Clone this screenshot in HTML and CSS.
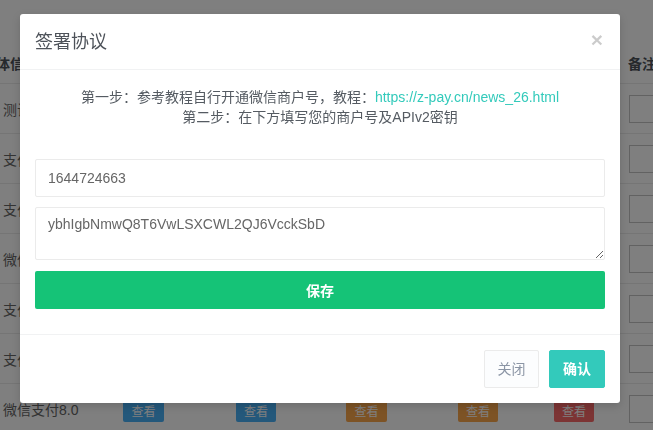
FILE: index.html
```html
<!DOCTYPE html>
<html lang="zh-CN">
<head>
<meta charset="utf-8">
<title>签署协议</title>
<link rel="stylesheet" href="styles.css">
</head>
<body>
<div class="page">
  <div class="grid">
    <div class="row head">
      <div class="c c1"><span class="clip">体信息</span></div>
      <div class="c c2"></div>
      <div class="c c3"></div>
      <div class="c c4"></div>
      <div class="c c5"></div>
      <div class="c c6"></div>
      <div class="c c7">备注</div>
    </div>
    <div class="row">
      <div class="c c1">测试通道</div>
      <div class="c c2"></div>
      <div class="c c3"></div>
      <div class="c c4"></div>
      <div class="c c5"></div>
      <div class="c c6"></div>
      <div class="c c7"><span class="box"></span></div>
    </div>
    <div class="row">
      <div class="c c1">支付宝当面付</div>
      <div class="c c2"></div>
      <div class="c c3"></div>
      <div class="c c4"></div>
      <div class="c c5"></div>
      <div class="c c6"></div>
      <div class="c c7"><span class="box"></span></div>
    </div>
    <div class="row">
      <div class="c c1">支付宝电脑网站</div>
      <div class="c c2"></div>
      <div class="c c3"></div>
      <div class="c c4"></div>
      <div class="c c5"></div>
      <div class="c c6"></div>
      <div class="c c7"><span class="box"></span></div>
    </div>
    <div class="row">
      <div class="c c1">微信支付</div>
      <div class="c c2"></div>
      <div class="c c3"></div>
      <div class="c c4"></div>
      <div class="c c5"></div>
      <div class="c c6"></div>
      <div class="c c7"><span class="box"></span></div>
    </div>
    <div class="row">
      <div class="c c1">支付宝H5</div>
      <div class="c c2"></div>
      <div class="c c3"></div>
      <div class="c c4"></div>
      <div class="c c5"></div>
      <div class="c c6"></div>
      <div class="c c7"><span class="box"></span></div>
    </div>
    <div class="row">
      <div class="c c1">支付宝APP</div>
      <div class="c c2"></div>
      <div class="c c3"></div>
      <div class="c c4"></div>
      <div class="c c5"></div>
      <div class="c c6"></div>
      <div class="c c7"><span class="box"></span></div>
    </div>
    <div class="row">
      <div class="c c1">微信支付8.0</div>
      <div class="c c2"><span class="tag info">查看</span></div>
      <div class="c c3"><span class="tag info">查看</span></div>
      <div class="c c4"><span class="tag warn">查看</span></div>
      <div class="c c5"><span class="tag warn">查看</span></div>
      <div class="c c6"><span class="tag danger">查看</span></div>
      <div class="c c7"><span class="box"></span></div>
    </div>
  </div>
</div>

<div class="backdrop"></div>

<div class="modal">
  <div class="modal-header">
    <h4 class="modal-title">签署协议</h4>
    <span class="close">×</span>
  </div>
  <div class="modal-body">
    <p class="intro">
      第一步：参考教程自行开通微信商户号，教程：<a class="link" href="#">https://z-pay.cn/news_26.html</a><br>
      第二步：在下方填写您的商户号及APIv2密钥
    </p>
    <input class="field" type="text" value="1644724663">
    <textarea class="field area">ybhIgbNmwQ8T6VwLSXCWL2QJ6VcckSbD</textarea>
    <button class="btn-save" type="button">保存</button>
  </div>
  <div class="modal-footer">
    <button class="btn btn-default" type="button">关闭</button>
    <button class="btn btn-primary" type="button">确认</button>
  </div>
</div>
</body>
</html>
```

FILE: styles.css
```css
* {
  box-sizing: border-box;
}

html, body {
  margin: 0;
  padding: 0;
  background: #ffffff;
  overflow: hidden;
}

body {
  width: 653px;
  height: 430px;
  font-family: "Liberation Sans", "Noto Sans CJK SC", sans-serif;
  font-size: 14px;
  color: #4d5259;
}

/* background list */
.page {
  width: 653px;
  height: 430px;
  padding-top: 43px;
  overflow: hidden;
}

.grid {
  width: 653px;
}

.row {
  display: flex;
  align-items: center;
  height: 50px;
  border-top: 1px solid #ebebeb;
  color: #666666;
}

.row.head {
  height: 40px;
  border-top: none;
  font-weight: bold;
  color: #4d5259;
}

.c {
  flex: none;
  white-space: nowrap;
  overflow: hidden;
}

.c1 {
  width: 88px;
  padding-left: 3px;
}

.clip {
  display: inline-block;
  margin-left: -7px;
}

.c2 { width: 111px; text-align: center; }
.c3 { width: 114px; text-align: center; }
.c4 { width: 107px; text-align: center; }
.c5 { width: 116px; text-align: center; }
.c6 { width: 76px; text-align: center; }
.c7 { width: 41px; padding-left: 16px; }

.tag {
  display: inline-block;
  height: 22px;
  line-height: 22px;
  padding: 0 8px;
  margin-top: 4px;
  border-radius: 2px;
  font-family: "Noto Sans CJK SC", sans-serif;
  font-size: 12px;
  color: #ffffff;
}

.info { background: #48b0f7; }
.warn { background: #faa64b; }
.danger { background: #f96868; }

.box {
  display: block;
  width: 120px;
  height: 28px;
  margin-left: 1px;
  border: 1px solid #c4c4c4;
  background: #ffffff;
}

/* overlay */
.backdrop {
  position: fixed;
  left: 0;
  top: 0;
  right: 0;
  bottom: 0;
  background: rgba(0, 0, 0, 0.5);
}

/* modal */
.modal {
  position: absolute;
  left: 20px;
  top: 14px;
  width: 600px;
  background: #ffffff;
  border-radius: 3px;
  box-shadow: 0 3px 9px rgba(0, 0, 0, 0.15);
}

.modal-header {
  height: 56px;
  padding: 0 15px;
  border-bottom: 1px solid #f1f2f3;
  display: flex;
  align-items: center;
  justify-content: space-between;
}

.modal-title {
  margin: 0;
  font-size: 18px;
  font-weight: normal;
  line-height: 24px;
  color: #4d5259;
}

.close {
  font-family: "Liberation Sans", sans-serif;
  font-size: 21px;
  font-weight: bold;
  line-height: 1;
  color: #000000;
  opacity: 0.2;
  margin-top: -4px;
  margin-right: 2px;
}

.modal-body {
  padding: 17px 15px 25px;
}

.intro {
  margin: 0 0 32px;
  text-align: center;
  line-height: 20px;
  color: #555b62;
}

.link {
  color: #33cabb;
  text-decoration: none;
}

.field {
  display: block;
  width: 100%;
  height: 38px;
  margin: 0 0 10px;
  padding: 6px 12px;
  border: 1px solid #ebebeb;
  border-radius: 2px;
  background: #ffffff;
  font-family: "Liberation Sans", "Noto Sans CJK SC", sans-serif;
  font-size: 14px;
  line-height: 20px;
  color: #666666;
  outline: none;
}

.area {
  height: 53px;
  margin-bottom: 11px;
  resize: vertical;
}

.btn-save {
  display: block;
  width: 100%;
  height: 38px;
  border: none;
  border-radius: 2px;
  background: #15c377;
  color: #ffffff;
  font-family: "Liberation Sans", "Noto Sans CJK SC", sans-serif;
  font-size: 14px;
  font-weight: bold;
}

.modal-footer {
  border-top: 1px solid #f1f2f3;
  padding: 15px;
  display: flex;
  justify-content: flex-end;
  gap: 10px;
}

.btn {
  height: 38px;
  padding: 0 12px;
  border-radius: 2px;
  font-family: "Liberation Sans", "Noto Sans CJK SC", sans-serif;
  font-size: 14px;
  line-height: 36px;
}

.btn-default {
  width: 55px;
  background: #fcfdfe;
  border: 1px solid #ebebeb;
  color: #8b95a5;
}

.btn-primary {
  width: 56px;
  background: #33cabb;
  border: 1px solid #33cabb;
  color: #ffffff;
  font-weight: bold;
}
```
